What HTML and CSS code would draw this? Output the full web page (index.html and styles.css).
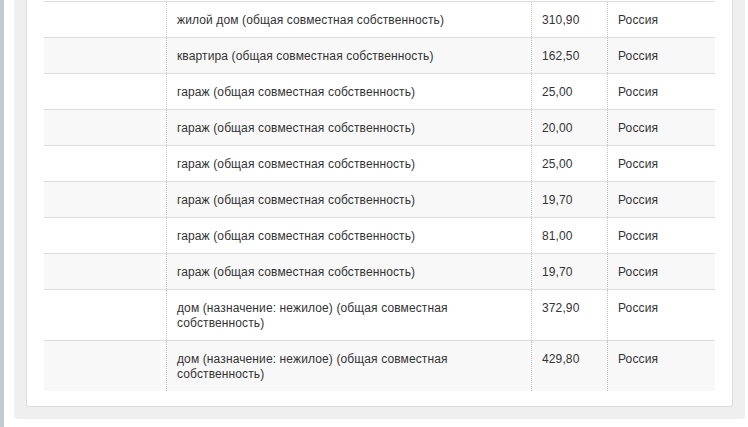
FILE: index.html
```html
<!DOCTYPE html>
<html lang="ru">
<head>
<meta charset="utf-8">
<title>Недвижимость</title>
<link rel="stylesheet" href="styles.css">
</head>
<body>
<div class="page">
  <div class="side-strip"></div>
  <div class="content">
    <div class="panel">
      <div class="estate-table">
        <div class="row">
          <div class="cell"></div>
          <div class="cell">жилой дом (общая совместная собственность)</div>
          <div class="cell">310,90</div>
          <div class="cell">Россия</div>
        </div>
        <div class="row alt">
          <div class="cell"></div>
          <div class="cell">квартира (общая совместная собственность)</div>
          <div class="cell">162,50</div>
          <div class="cell">Россия</div>
        </div>
        <div class="row">
          <div class="cell"></div>
          <div class="cell">гараж (общая совместная собственность)</div>
          <div class="cell">25,00</div>
          <div class="cell">Россия</div>
        </div>
        <div class="row alt">
          <div class="cell"></div>
          <div class="cell">гараж (общая совместная собственность)</div>
          <div class="cell">20,00</div>
          <div class="cell">Россия</div>
        </div>
        <div class="row">
          <div class="cell"></div>
          <div class="cell">гараж (общая совместная собственность)</div>
          <div class="cell">25,00</div>
          <div class="cell">Россия</div>
        </div>
        <div class="row alt">
          <div class="cell"></div>
          <div class="cell">гараж (общая совместная собственность)</div>
          <div class="cell">19,70</div>
          <div class="cell">Россия</div>
        </div>
        <div class="row">
          <div class="cell"></div>
          <div class="cell">гараж (общая совместная собственность)</div>
          <div class="cell">81,00</div>
          <div class="cell">Россия</div>
        </div>
        <div class="row alt">
          <div class="cell"></div>
          <div class="cell">гараж (общая совместная собственность)</div>
          <div class="cell">19,70</div>
          <div class="cell">Россия</div>
        </div>
        <div class="row">
          <div class="cell"></div>
          <div class="cell">дом (назначение: нежилое) (общая совместная собственность)</div>
          <div class="cell">372,90</div>
          <div class="cell">Россия</div>
        </div>
        <div class="row alt">
          <div class="cell"></div>
          <div class="cell">дом (назначение: нежилое) (общая совместная собственность)</div>
          <div class="cell">429,80</div>
          <div class="cell">Россия</div>
        </div>
      </div>
    </div>
  </div>
</div>
</body>
</html>
```
FILE: styles.css
```css
html, body {
  margin: 0;
  padding: 0;
  background: #ffffff;
}

body {
  font-family: "Liberation Sans", Arial, sans-serif;
  font-size: 12px;
  color: #333333;
}

.page {
  display: flex;
  align-items: flex-start;
  height: 427px;
  overflow: hidden;
}

.side-strip {
  width: 4px;
  height: 427px;
  background: #c2cad2;
  flex: none;
}

.content {
  margin-left: 10px;
  width: 731px;
  box-sizing: border-box;
  background: #efefef;
  padding: 0 12px 12px 12px;
  border-radius: 0 0 4px 4px;
}

.panel {
  background: #ffffff;
  border: 1px solid #dcdcdc;
  border-top: none;
  border-radius: 0 0 3px 3px;
  padding: 1px 17px 15px 17px;
}

.estate-table {
  display: flex;
  flex-direction: column;
}

.row {
  display: grid;
  grid-template-columns: 122px 365px 76px 108px;
  border-top: 1px solid #dddddd;
  background: #ffffff;
}

.row.alt {
  background: #f8f8f8;
}

.cell {
  padding: 11px 10px 9px 10px;
  line-height: 15px;
  letter-spacing: 0.12px;
  box-sizing: border-box;
}

.cell + .cell {
  border-left: 1px dotted #c4c4c4;
}
```
